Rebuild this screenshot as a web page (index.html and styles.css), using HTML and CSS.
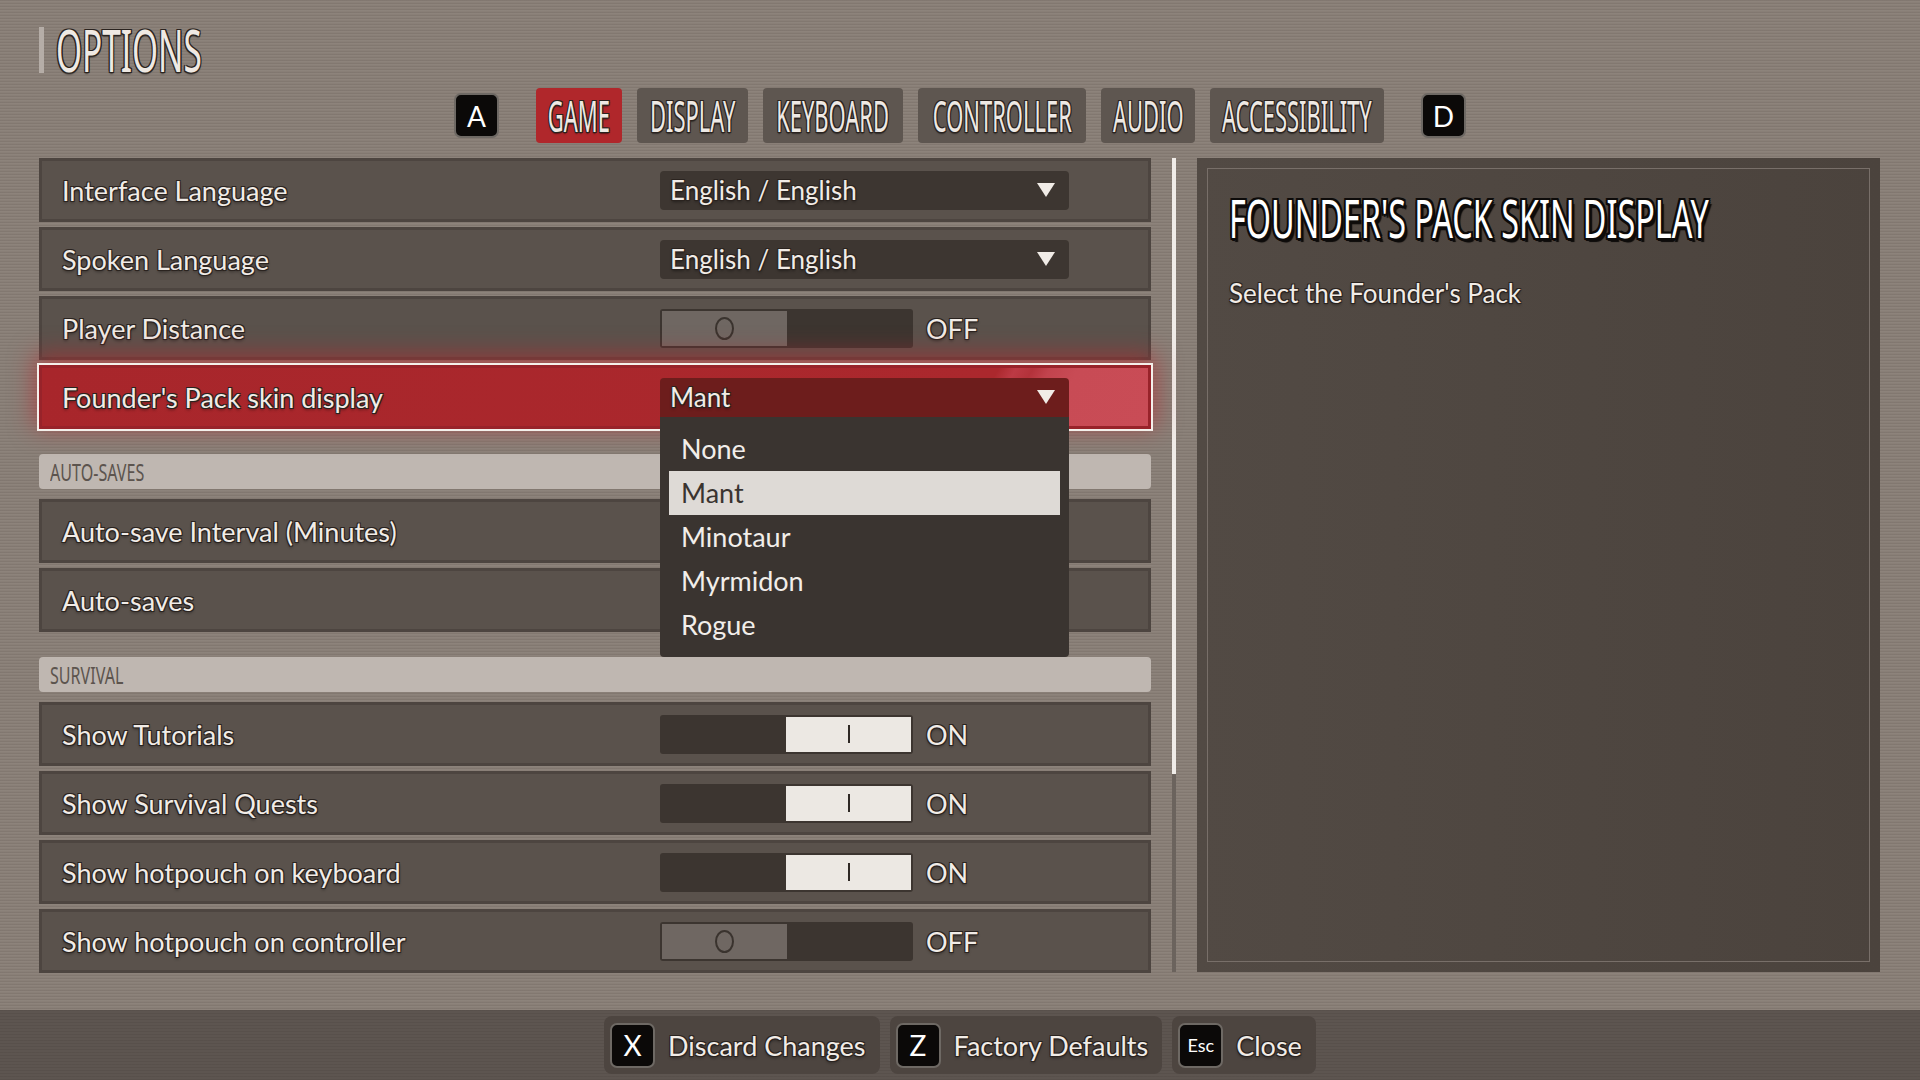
FILE: index.html
```html
<!DOCTYPE html>
<html lang="en">
<head>
    <meta charset="UTF-8">
    <meta name="viewport" content="width=device-width, initial-scale=1.0">
    <title>Options</title>
    <link rel="stylesheet" href="styles.css">
</head>
<body>
    <div class="screen">
        <!-- Page title -->
        <header class="page-head">
            <h1 class="page-title"><span class="squeeze outlined">OPTIONS</span></h1>
        </header>

        <!-- Category tabs -->
        <nav class="tabs">
            <span class="key tab-key">A</span>
            <div class="tab tab-game active"><span class="squeeze outlined">GAME</span></div>
            <div class="tab tab-display"><span class="squeeze outlined">DISPLAY</span></div>
            <div class="tab tab-keyboard"><span class="squeeze outlined">KEYBOARD</span></div>
            <div class="tab tab-controller"><span class="squeeze outlined">CONTROLLER</span></div>
            <div class="tab tab-audio"><span class="squeeze outlined">AUDIO</span></div>
            <div class="tab tab-access"><span class="squeeze outlined">ACCESSIBILITY</span></div>
            <span class="key tab-key">D</span>
        </nav>

        <main class="content">
            <!-- Settings list -->
            <section class="settings">
                <div class="row">
                    <span class="label outlined">Interface Language</span>
                    <div class="select"><span class="outlined">English / English</span></div>
                </div>
                <div class="row">
                    <span class="label outlined">Spoken Language</span>
                    <div class="select"><span class="outlined">English / English</span></div>
                </div>
                <div class="row">
                    <span class="label outlined">Player Distance</span>
                    <div class="switch-cell">
                        <div class="toggle"><span class="knob"></span></div>
                        <span class="state outlined">OFF</span>
                    </div>
                </div>
                <div class="row selected">
                    <span class="label outlined">Founder's Pack skin display</span>
                    <div class="select open">
                        <span class="outlined">Mant</span>
                        <ul class="options">
                            <li>None</li>
                            <li class="current">Mant</li>
                            <li>Minotaur</li>
                            <li>Myrmidon</li>
                            <li>Rogue</li>
                        </ul>
                    </div>
                </div>

                <div class="section"><span class="squeeze">AUTO-SAVES</span></div>
                <div class="row">
                    <span class="label outlined">Auto-save Interval (Minutes)</span>
                </div>
                <div class="row">
                    <span class="label outlined">Auto-saves</span>
                </div>

                <div class="section"><span class="squeeze">SURVIVAL</span></div>
                <div class="row">
                    <span class="label outlined">Show Tutorials</span>
                    <div class="switch-cell">
                        <div class="toggle on"><span class="knob"></span></div>
                        <span class="state outlined">ON</span>
                    </div>
                </div>
                <div class="row">
                    <span class="label outlined">Show Survival Quests</span>
                    <div class="switch-cell">
                        <div class="toggle on"><span class="knob"></span></div>
                        <span class="state outlined">ON</span>
                    </div>
                </div>
                <div class="row">
                    <span class="label outlined">Show hotpouch on keyboard</span>
                    <div class="switch-cell">
                        <div class="toggle on"><span class="knob"></span></div>
                        <span class="state outlined">ON</span>
                    </div>
                </div>
                <div class="row">
                    <span class="label outlined">Show hotpouch on controller</span>
                    <div class="switch-cell">
                        <div class="toggle"><span class="knob"></span></div>
                        <span class="state outlined">OFF</span>
                    </div>
                </div>
            </section>

            <div class="scrollbar"><div class="scrollbar-thumb"></div></div>

            <!-- Description of the focused setting -->
            <aside class="info">
                <div class="info-inner">
                    <h2 class="info-title"><span class="squeeze">FOUNDER'S PACK SKIN DISPLAY</span></h2>
                    <p class="info-text outlined">Select the Founder's Pack</p>
                </div>
            </aside>
        </main>

        <!-- Bottom action bar -->
        <footer class="actions">
            <div class="action"><span class="key">X</span><span class="outlined">Discard Changes</span></div>
            <div class="action"><span class="key">Z</span><span class="outlined">Factory Defaults</span></div>
            <div class="action"><span class="key key-small">Esc</span><span class="outlined">Close</span></div>
        </footer>
    </div>
</body>
</html>
```

FILE: styles.css
```css
/* Global */
* {
    box-sizing: border-box;
}
body {
    margin: 0;
    width: 1920px;
    height: 1080px;
    overflow: hidden;
    font-family: Lato, "Open Sans", sans-serif;
    color: #f1ece7;
    background-color: #897f77;
    background-image: repeating-linear-gradient(180deg, rgba(45, 35, 30, 0.08) 0 1px, rgba(255, 255, 255, 0.03) 1px 2px, transparent 2px 3px);
}
.screen {
    height: 1080px;
    display: flex;
    flex-direction: column;
}
/* Condensed display lettering: squeezed horizontally */
.squeeze {
    display: inline-block;
    white-space: nowrap;
    font-family: "Noto Sans", "DejaVu Sans", sans-serif;
    font-weight: 400;
    transform-origin: left center;
}
.outlined {
    text-shadow: -1px -1px 0 #2a231f, 1px -1px 0 #2a231f, -1px 1px 0 #2a231f, 1px 1px 0 #2a231f, 0 2px 3px rgba(0, 0, 0, 0.45);
}
.squeeze.outlined {
    text-shadow: -2px -1px 0 #2a231f, 2px -1px 0 #2a231f, -2px 1px 0 #2a231f, 2px 1px 0 #2a231f, 0 2px 2px rgba(0, 0, 0, 0.5);
}
/* Title */
.page-head {
    padding: 27px 0 0 39px;
}
.page-title {
    margin: 0;
    height: 46px;
    border-left: 5px solid #b5ada7;
    padding-left: 12px;
    font-size: 58px;
    font-weight: 400;
    line-height: 46px;
    color: #efe9e3;
}
.page-title .squeeze {
    transform: scaleX(0.575);
}
/* Tabs */
.tabs {
    margin-top: 15px;
    height: 55px;
    display: flex;
    justify-content: center;
    align-items: center;
    gap: 15px;
}
.tab {
    height: 55px;
    flex-shrink: 0;
    display: flex;
    justify-content: center;
    border-radius: 4px;
    background-color: #5e5650;
    font-size: 43px;
    line-height: 55px;
    color: #eee9e4;
}
.tab .squeeze {
    transform-origin: center center;
    transform: scaleX(0.51);
}
.tab.active {
    background-color: #b0272b;
}
.tab-game { width: 86px; }
.tab-display { width: 111px; }
.tab-keyboard { width: 140px; }
.tab-controller { width: 168px; }
.tab-audio { width: 94px; }
.tab-access { width: 174px; }
.key {
    width: 45px;
    height: 45px;
    display: flex;
    align-items: center;
    justify-content: center;
    flex-shrink: 0;
    background-color: #0b0908;
    border: 2px solid #6e6964;
    border-radius: 7px;
    font-size: 28px;
    color: #ffffff;
}
.tab-key {
    margin: 0 22px;
}
.key-small {
    font-size: 18px;
}
/* Main area */
.content {
    margin-top: 15px;
    height: 814px;
    padding: 0 40px 0 39px;
    display: flex;
    gap: 21px;
}
.settings {
    width: 1112px;
    flex-shrink: 0;
    display: flex;
    flex-direction: column;
    gap: 5px;
}
.row {
    height: 64px;
    flex-shrink: 0;
    display: grid;
    grid-template-columns: 598px 409px 1fr;
    align-items: center;
    padding-left: 20px;
    background-color: #5a524c;
    border: 3px solid #4d4540;
    font-size: 27px;
}
.row.selected {
    position: relative;
    z-index: 2;
    background: linear-gradient(120deg, #a8262b 0%, #ab282d 84%, #bd3a44 85.5%, #b3323a 87%, #c2434d 88.5%, #c84b55 91%, #c94c56 100%);
    border-color: #98232a;
    box-shadow: 0 0 0 2px #f4f0eb, 0 -6px 24px 5px rgba(185, 40, 45, 0.6);
}
/* Dropdowns */
.select {
    position: relative;
    height: 39px;
    padding: 0 14px 0 10px;
    display: flex;
    align-items: center;
    justify-content: space-between;
    background-color: #3d3631;
    border-radius: 4px;
    font-size: 26px;
}
.select::after {
    content: "";
    border-left: 9px solid transparent;
    border-right: 9px solid transparent;
    border-top: 14px solid #f1ece7;
}
.row.selected .select {
    background-color: #6d1d1c;
    border-radius: 4px 4px 0 0;
}
.options {
    position: absolute;
    top: 100%;
    left: 0;
    width: 100%;
    margin: 0;
    padding: 10px 9px;
    list-style: none;
    background-color: #3a3430;
    border-radius: 0 0 4px 4px;
    z-index: 5;
}
.options li {
    height: 44px;
    line-height: 44px;
    padding-left: 12px;
    font-size: 27px;
    color: #f2eeea;
}
.options li.current {
    background-color: #dedad6;
    color: #3a3430;
}
/* Toggles */
.switch-cell {
    display: flex;
    align-items: center;
}
.toggle {
    width: 253px;
    height: 39px;
    display: flex;
    padding: 2px;
    background-color: #3c3530;
    border-radius: 3px;
}
.knob {
    width: 125px;
    display: flex;
    align-items: center;
    justify-content: center;
    background-color: #6f6762;
}
.knob::before {
    content: "";
    width: 15px;
    height: 19px;
    border: 2px solid #3a332e;
    border-radius: 50%;
}
.toggle.on .knob {
    margin-left: auto;
    background-color: #ece8e3;
}
.toggle.on .knob::before {
    width: 2px;
    height: 18px;
    border: 0;
    border-radius: 0;
    background-color: #2f2925;
}
.state {
    margin-left: 13px;
}
/* Section headers */
.section {
    height: 35px;
    flex-shrink: 0;
    margin: 20px 0 5px;
    padding-left: 11px;
    background-color: #bfb7b1;
    border-radius: 4px;
    color: #5c544e;
    font-size: 24px;
    line-height: 35px;
}
.section .squeeze {
    transform: scaleX(0.67);
}
/* Scrollbar */
.scrollbar {
    width: 4px;
    flex-shrink: 0;
    background-color: #6b635d;
}
.scrollbar-thumb {
    height: 616px;
    background-color: #f0ece8;
}
/* Info panel */
.info {
    flex: 1;
    min-width: 0;
    overflow: hidden;
    padding: 10px;
    background: linear-gradient(90deg, #524a44, #4b433d);
}
.info-inner {
    height: 100%;
    padding: 22px 21px;
    border: 1px solid #786f69;
}
.info-title {
    margin: 0;
    font-size: 53px;
    font-weight: 400;
    line-height: 53px;
    color: #ffffff;
}
.info-title .squeeze {
    transform: scaleX(0.61);
    text-shadow: -3px -2px 0 #0d0b0a, 3px -2px 0 #0d0b0a, -3px 2px 0 #0d0b0a, 3px 2px 0 #0d0b0a, 0 3px 0 #0d0b0a, 3px 0 0 #0d0b0a, -3px 0 0 #0d0b0a, 0 -2px 0 #0d0b0a, 5px 4px 1px #0d0b0a;
}
.info-text {
    margin: 34px 0 0;
    font-size: 26px;
    line-height: 30px;
}
/* Footer actions */
.actions {
    margin-top: auto;
    height: 70px;
    display: flex;
    justify-content: center;
    align-items: center;
    gap: 10px;
    background-color: #5d5550;
    background-image: repeating-linear-gradient(180deg, rgba(30, 22, 18, 0.08) 0 1px, transparent 1px 3px);
}
.action {
    height: 58px;
    padding: 0 14px 0 6px;
    display: flex;
    align-items: center;
    gap: 13px;
    background-color: #4d4540;
    border-radius: 8px;
    font-size: 27px;
}
```
